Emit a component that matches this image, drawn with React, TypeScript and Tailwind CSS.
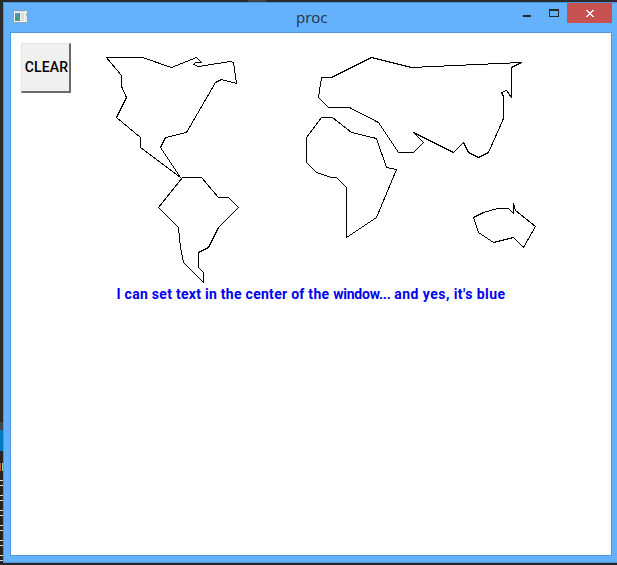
const outlines: string[] = [
  // North America
  '106,57 142,57 171,67 196,57 201,62 195,62 193,64 198,66 230,61 233,62 236,83 221,79 215,82 186,132 165,137 160,147 180,177 140,147 140,137 116,117 126,97 121,86 121,75',
  // South America
  '182,177 201,177 218,197 228,197 238,207 218,227 208,247 198,252 198,267 203,272 203,282 183,262 180,247 178,227 158,207',
  // Eurasia
  '321,77 331,77 371,57 411,67 521,62 511,67 511,97 506,90 501,92 503,96 503,118 488,152 478,157 468,152 463,142 453,152 413,132 423,142 413,152 398,152 378,122 349,107 328,107 318,97',
  // Africa
  '321,117 332,117 351,132 376,138 386,167 396,169 376,217 346,237 346,187 336,177 331,177 316,172 306,162 306,137',
  // Australia
  '473,217 483,212 497,208 508,208 513,213 513,203 515,210 535,226 523,247 513,237 493,242 478,232',
];

function WorldMap() {
  return (
    <svg className="mt-[20px] ml-[30px] block h-[232px] w-[440px] shrink-0" viewBox="101 53 440 232" fill="none" stroke="#000" strokeWidth="1" shapeRendering="crispEdges">
      <g transform="translate(0.5 0.5)">
        {outlines.map((points) => (
          <polygon key={points} points={points} />
        ))}
      </g>
    </svg>
  );
}

function AppIcon() {
  return (
    <svg className="mt-[7px] ml-[9px] block h-[13px] w-[15px] shrink-0" viewBox="0 0 15 13" shapeRendering="crispEdges">
      <rect width="15" height="13" fill="#83a6bf" />
      <rect x="1" y="1" width="13" height="11" fill="#f4f5f4" />
      <rect x="1" y="1" width="11" height="1" fill="#d4dce2" />
      <rect x="2" y="3" width="5" height="8" fill="#468e91" />
      <rect x="2" y="3" width="3" height="4" fill="#5d91b5" />
      <rect x="4" y="6" width="3" height="4" fill="#43a574" />
      <rect x="8" y="3" width="3" height="8" fill="#d9dcdd" />
      <rect x="12" y="3" width="2" height="8" fill="#e3e8e0" />
      <rect x="13" y="3" width="1" height="3" fill="#a7cda8" />
    </svg>
  );
}

function TitleBar() {
  return (
    <header className="flex h-[29px] items-start">
      <AppIcon />
      <h1 className="ml-[268px] w-[227px] pt-[3px] font-['Open_Sans','Noto_Sans',sans-serif] text-[15px] leading-[22px] text-[#25323e]">proc</h1>
      <svg className="block h-[20px] w-[44px] shrink-0" viewBox="523 3 44 20" shapeRendering="crispEdges">
        <rect x="523" y="15" width="8" height="2" fill="#222a30" />
        <path fill="#222a30" fillRule="evenodd" d="M549 9h10v8h-10zM550 11v5h8v-5z" />
      </svg>
      <button className="flex h-[20px] w-[45px] shrink-0 items-center justify-center bg-[#c75050]" aria-label="Close">
        <svg className="block h-[7px] w-[8px]" viewBox="0 0 8 7" shapeRendering="crispEdges" fill="#fff">
          <path d="M0 0h2v1h-2zM6 0h2v1h-2zM1 1h2v1h-2zM5 1h2v1h-2zM2 2h4v1h-4zM3 3h2v1h-2zM2 4h4v1h-4zM1 5h2v1h-2zM5 5h2v1h-2zM0 6h2v1h-2zM6 6h2v1h-2z" />
        </svg>
      </button>
    </header>
  );
}

function Backdrop() {
  return (
    <div className="h-[565px] w-[3px] shrink-0 overflow-hidden bg-[#222325]">
      <div className="h-[422px] bg-[#292a2d]" />
      <div className="h-[8px] bg-[#434449]" />
      <div className="h-[21px] bg-[#0078c8]" />
      <div className="h-[12px]" />
      <div className="flex h-[8px] gap-px">
        <div className="w-px bg-[#b55c32]" />
        <div className="w-px bg-[#9dc9a0]" />
      </div>
      <div className="flex flex-col gap-[9px] pt-[9px]">
        {[0, 1, 2, 3, 4, 5].map((row) => (
          <div key={row} className="h-[6px] border-y border-[#e4d8c4]" />
        ))}
      </div>
    </div>
  );
}

export default function App() {
  return (
    <div className="flex h-[565px] w-[617px] overflow-hidden bg-[#26272a]">
      <Backdrop />
      <div className="flex w-[614px] flex-col">
        <div className="h-[2px] shrink-0 bg-[#292a2d]">
          <div className="ml-[245px] h-[2px] w-[18px] bg-[#424347]" />
        </div>
        <main className="h-[561px] border-t border-b border-l border-[#5093d5] bg-[#64b2fc]">
          <TitleBar />
          <section className="ml-[6px] h-[524px] w-[602px] border border-[#5096d9] bg-white">
            <div className="flex h-[252px] items-start pl-[10px]">
              <button className="mt-[10px] h-[50px] w-[50px] shrink-0 border-t border-r-2 border-b-2 border-l border-t-[#e3e3e3] border-r-[#696969] border-b-[#696969] border-l-[#e3e3e3] bg-[#f0f0f0] pl-[2px] font-['Roboto',sans-serif] text-[14px] font-medium tracking-[0.2px] text-black">
                CLEAR
              </button>
              <WorldMap />
            </div>
            <p className="text-center font-['Roboto',sans-serif] text-[14px] leading-[18px] font-bold tracking-[0.28px] whitespace-nowrap text-[#0000f0]">
              I can set text in the center of the <span className="tracking-[-0.2px]">window...</span>{' '}
              <span className="tracking-[0.45px]">and yes, it's blue</span>
            </p>
          </section>
        </main>
      </div>
    </div>
  );
}
